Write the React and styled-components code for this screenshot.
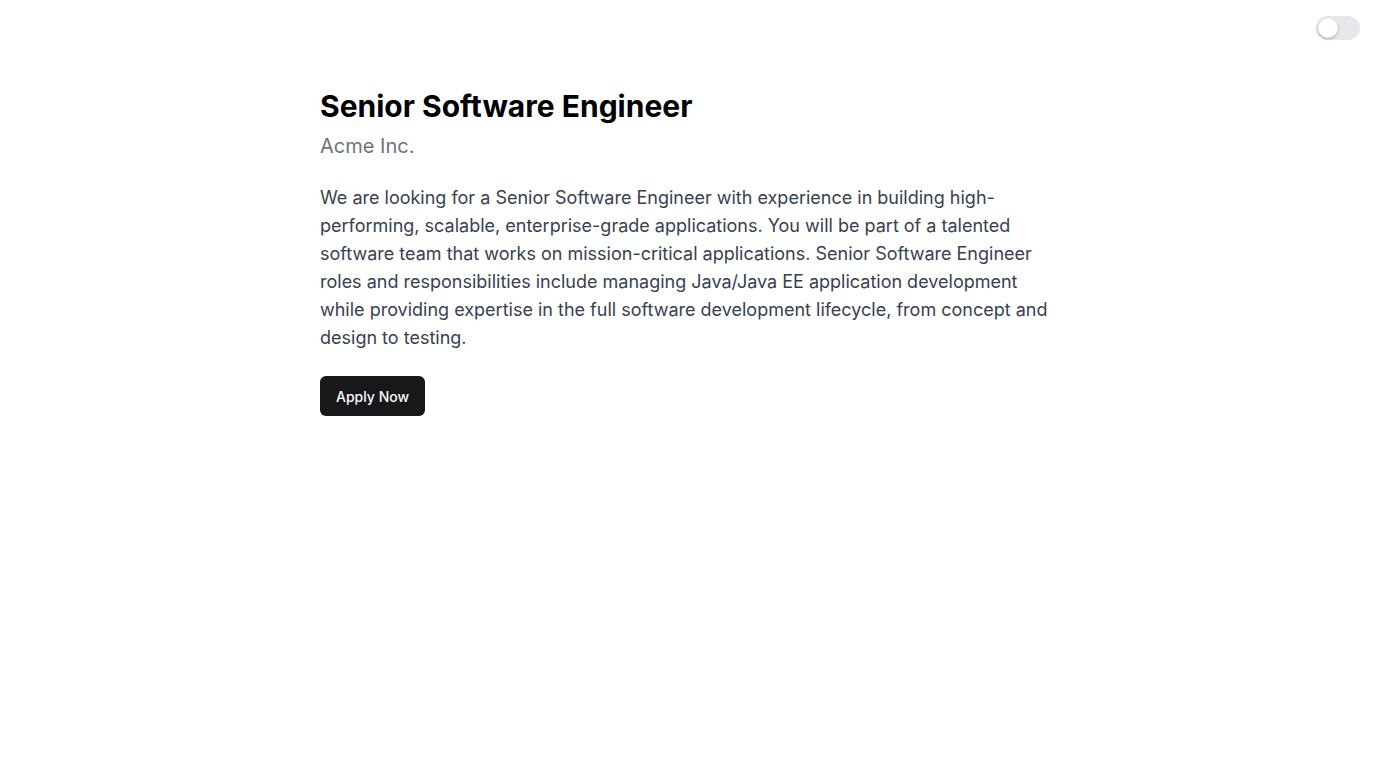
import React, { useState } from "react";
import styled, { createGlobalStyle } from "styled-components";

const Global = createGlobalStyle`
  html, body { margin: 0; padding: 0; background: #ffffff; }
  body { font-family: Inter, "Noto Sans", sans-serif; -webkit-font-smoothing: antialiased; }
  * { box-sizing: border-box; }
`;

const Page = styled.div`
  position: relative;
  min-height: 768px;
  background: #ffffff;
`;

const Toggle = styled.button`
  position: absolute;
  top: 16px;
  right: 16px;
  width: 44px;
  height: 24px;
  padding: 2px;
  border: none;
  border-radius: 12px;
  background: ${(p) => (p.$on ? "#18181b" : "#e5e7eb")};
  display: flex;
  align-items: center;
  cursor: pointer;
`;

const Thumb = styled.span`
  width: 20px;
  height: 20px;
  border-radius: 50%;
  background: #ffffff;
  box-shadow: 0 1px 3px rgba(0, 0, 0, 0.2), 0 1px 2px rgba(0, 0, 0, 0.12);
  transform: translateX(${(p) => (p.$on ? "20px" : "0")});
  transition: transform 0.15s;
`;

const Container = styled.main`
  max-width: 768px;
  margin: 0 auto;
  padding: 88px 16px 48px;
`;

const Title = styled.h1`
  margin: 0;
  font-size: 30px;
  line-height: 36px;
  font-weight: 700;
  color: #000000;
`;

const Company = styled.p`
  margin: 8px 0 0;
  font-size: 20px;
  line-height: 28px;
  color: #6b7280;
`;

const Description = styled.p`
  margin: 24px 0 0;
  font-size: 18px;
  line-height: 28px;
  color: #374151;
`;

const ApplyButton = styled.button`
  margin-top: 24px;
  height: 40px;
  padding: 0 16px;
  border: none;
  border-radius: 6px;
  background: #18181b;
  color: #fafafa;
  font-family: Inter, sans-serif;
  font-size: 14px;
  font-weight: 500;
  cursor: pointer;
`;

export default function App() {
  const [on, setOn] = useState(false);
  return (
    <Page>
      <Global />
      <Toggle $on={on} onClick={() => setOn(!on)} aria-label="Toggle theme">
        <Thumb $on={on} />
      </Toggle>
      <Container>
        <Title>Senior Software Engineer</Title>
        <Company>Acme Inc.</Company>
        <Description>
          We are looking for a Senior Software Engineer with experience in building high-performing,
          scalable, enterprise-grade applications. You will be part of a talented software team that
          works on mission-critical applications. Senior Software Engineer roles and responsibilities
          include managing Java/Java EE application development while providing expertise in the full
          software development lifecycle, from concept and design to testing.
        </Description>
        <ApplyButton>Apply Now</ApplyButton>
      </Container>
    </Page>
  );
}
